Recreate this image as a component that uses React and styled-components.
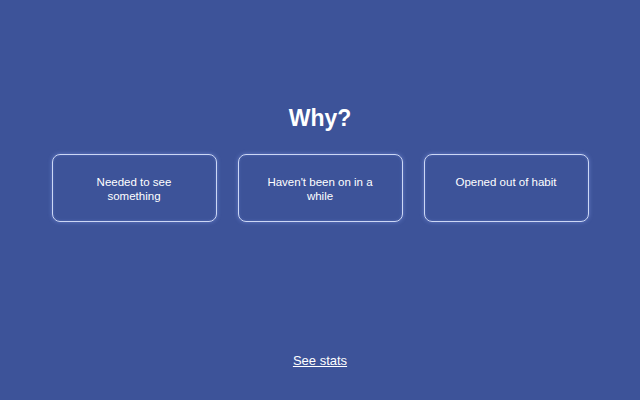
import React from 'react';
import styled, {createGlobalStyle} from "styled-components";

const GlobalStyle = createGlobalStyle`
    html, body {
        margin: 0;
        padding: 0;
        background: #3d5399;
    }
    body {
        font-family: "Liberation Sans", Arial, sans-serif;
        color: #ffffff;
    }
`;

const Page = styled.div`
    height: 400px;
    display: flex;
    flex-direction: column;
    align-items: center;
    background: #3d5399;
    box-sizing: border-box;
    padding: 104px 0 31px;
`;

const Title = styled.h1`
    margin: 0;
    font-size: 23px;
    line-height: 28px;
    font-weight: 700;
    color: #ffffff;
`;

const Choices = styled.div`
    margin-top: 22px;
    display: grid;
    grid-template-columns: repeat(3, 165px);
    column-gap: 21px;
`;

const Choice = styled.button`
    height: 68px;
    box-sizing: border-box;
    padding: 20px 26px 0;
    display: flex;
    justify-content: center;
    align-items: flex-start;
    background: transparent;
    border: 1px solid rgba(220, 230, 255, 0.9);
    border-radius: 8px;
    box-shadow: 0 0 4px rgba(150, 175, 255, 0.45), inset 0 0 3px rgba(150, 175, 255, 0.3);
    color: #ffffff;
    font-family: "Liberation Sans", Arial, sans-serif;
    font-size: 11.5px;
    line-height: 14px;
    text-align: center;
    cursor: pointer;
`;

const Spacer = styled.div`
    flex: 1;
`;

const StatsLink = styled.a`
    font-size: 13px;
    line-height: 16px;
    color: #ffffff;
    text-decoration: underline;
    cursor: pointer;
`;

const reasons = [
    "Needed to see something",
    "Haven't been on in a while",
    "Opened out of habit",
];

export default function App() {
    return (
        <>
            <GlobalStyle/>
            <Page>
                <Title>Why?</Title>
                <Choices>
                    {reasons.map(r => (
                        <Choice key={r}>{r}</Choice>
                    ))}
                </Choices>
                <Spacer/>
                <StatsLink>See stats</StatsLink>
            </Page>
        </>
    );
}
